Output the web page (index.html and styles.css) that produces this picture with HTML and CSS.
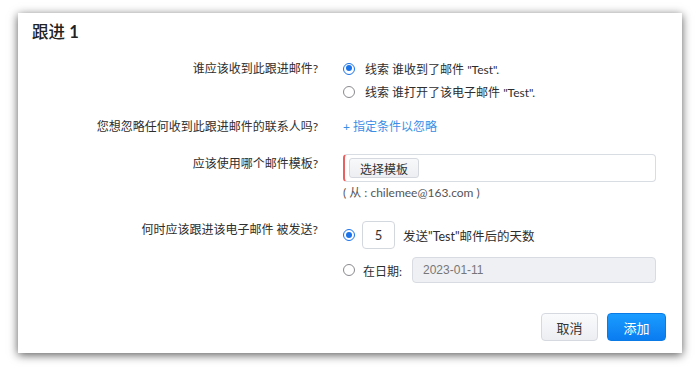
FILE: index.html
```html
<!DOCTYPE html>
<html lang="zh-CN">
<head>
    <meta charset="UTF-8">
    <meta name="viewport" content="width=device-width, initial-scale=1.0">
    <title>跟进 1</title>
    <link rel="stylesheet" href="styles.css">
</head>
<body>
    <div class="panel">
        <h2 class="title">跟进 <b>1</b></h2>
        <form class="form">
            <div class="row row-recipients">
                <label class="label">谁应该收到此跟进邮件?</label>
                <div class="control">
                    <div class="option">
                        <span class="radio checked"></span>
                        <span>线索 谁收到了邮件 "Test".</span>
                    </div>
                    <div class="option">
                        <span class="radio"></span>
                        <span>线索 谁打开了该电子邮件 "Test".</span>
                    </div>
                </div>
            </div>

            <div class="row row-ignore">
                <label class="label">您想忽略任何收到此跟进邮件的联系人吗?</label>
                <div class="control">
                    <a class="link" href="#">+ 指定条件以忽略</a>
                </div>
            </div>

            <div class="row row-template">
                <label class="label">应该使用哪个邮件模板?</label>
                <div class="control">
                    <div class="template-box">
                        <button type="button" class="small-btn">选择模板</button>
                    </div>
                    <div class="note">( 从 : chilemee@163.com )</div>
                </div>
            </div>

            <div class="row row-when">
                <label class="label">何时应该跟进该电子邮件 被发送?</label>
                <div class="control">
                    <div class="option option-days">
                        <span class="radio checked"></span>
                        <input class="days" type="text" value="5">
                        <span>发送"Test"邮件后的天数</span>
                    </div>
                    <div class="option option-date">
                        <span class="radio"></span>
                        <span>在日期:</span>
                        <input class="date" type="text" value="2023-01-11" disabled>
                    </div>
                </div>
            </div>

            <div class="actions">
                <button type="button" class="btn">取消</button>
                <button type="submit" class="btn btn-primary">添加</button>
            </div>
        </form>
    </div>
</body>
</html>
```

FILE: styles.css
```css
body {
    margin: 0;
    padding-bottom: 14px;
    background: #fff;
    font-family: "Lato", "Noto Sans CJK SC", sans-serif;
    font-size: 12px;
    color: #2e2e2e;
}

.panel {
    width: 664px;
    height: 340px;
    margin: 13px 0 0 18px;
    padding: 9px 16px 0 14px;
    box-sizing: border-box;
    background: #fff;
    box-shadow: 0 2px 9px rgba(0, 0, 0, 0.65);
}

.title {
    margin: 0;
    font-size: 16.5px;
    line-height: 20px;
    font-weight: 500;
    color: #222;
}

    .title b {
        font-weight: 700;
    }

.form {
    margin-top: 15px;
}

.row {
    display: grid;
    grid-template-columns: 286px 313px;
    column-gap: 25px;
}

.label {
    text-align: right;
    line-height: 23px;
}

.row-ignore {
    margin-top: 12px;
}

.row-template {
    margin-top: 16px;
}

    .row-template .label {
        line-height: 20px;
    }

.row-when {
    margin-top: 18px;
}

    .row-when .label {
        line-height: 18px;
    }

.option {
    display: flex;
    align-items: center;
    gap: 10px;
    height: 23px;
}

.radio {
    width: 12px;
    height: 12px;
    box-sizing: border-box;
    border: 1.5px solid #8a8a8f;
    border-radius: 50%;
    flex: none;
    position: relative;
}

    .radio.checked {
        border-color: #1a73e8;
    }

        .radio.checked::after {
            content: "";
            position: absolute;
            left: 1.5px;
            top: 1.5px;
            width: 6px;
            height: 6px;
            border-radius: 50%;
            background: #1a73e8;
        }

.link {
    display: block;
    line-height: 23px;
    color: #3a8ee6;
    text-decoration: none;
}

.template-box {
    height: 28px;
    box-sizing: border-box;
    border: 1px solid #d8dce3;
    border-left: 2px solid #e8605f;
    border-radius: 4px;
    padding: 3px 0 0 4px;
}

.small-btn {
    width: 70px;
    height: 20px;
    padding: 0;
    font: inherit;
    color: #333;
    background: linear-gradient(#f8f9fa, #eceef2);
    border: 1px solid #d5d8de;
    border-radius: 3px;
}

.note {
    margin-top: 1px;
    line-height: 20px;
    color: #555;
}

.option-days {
    height: 28px;
    gap: 7px;
}

    .option-days span:last-child {
        margin-left: 1px;
        font-size: 12.5px;
    }

.days {
    width: 33px;
    height: 28px;
    box-sizing: border-box;
    border: 1px solid #d3d7de;
    border-radius: 4px;
    text-align: center;
    font: inherit;
    font-size: 13px;
    color: #333;
    padding: 0;
}

.option-date {
    height: 26px;
    margin-top: 8px;
    gap: 8px;
}

.date {
    flex: 1;
    height: 26px;
    box-sizing: border-box;
    margin-left: 2px;
    padding: 0 10px;
    background: #eef0f4;
    border: 1px solid #d8dbe1;
    border-radius: 4px;
    font-family: "Liberation Sans", sans-serif;
    font-size: 12px;
    color: #777;
}

.actions {
    display: flex;
    justify-content: flex-end;
    gap: 9px;
    margin-top: 30px;
}

.btn {
    width: 57px;
    height: 28px;
    padding: 0;
    font: inherit;
    font-size: 13px;
    color: #333;
    background: linear-gradient(#fafbfc, #eceef2);
    border: 1px solid #d6d9df;
    border-radius: 4px;
    cursor: pointer;
}

.btn-primary {
    width: 59px;
    color: #fff;
    background: linear-gradient(#1b9cff, #0a7cf0);
    border-color: #0a7ae6;
}
```
